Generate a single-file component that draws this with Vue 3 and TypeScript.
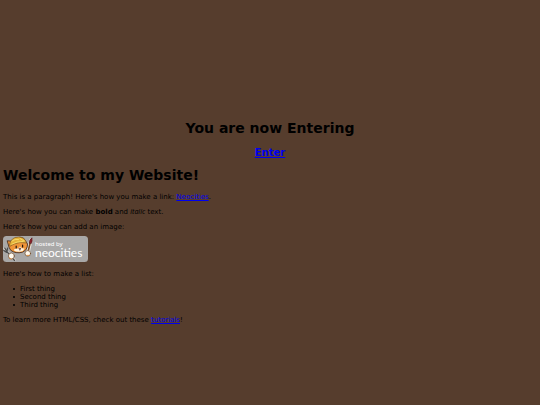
<script setup lang="ts">
const things: string[] = ['First thing', 'Second thing', 'Third thing']
</script>

<template>
  <main class="page">
    <header class="intro">
      <h1>You are now Entering</h1>
      <h2><a href="#welcome">Enter</a></h2>
    </header>

    <h1 id="welcome">Welcome to my Website!</h1>
    <p>This is a paragraph! Here's how you make a link: <a href="#neocities">Neocities</a>.</p>
    <p>Here's how you can make <strong>bold</strong> and <em>italic</em> text.</p>

    <figure>
      <figcaption>Here's how you can add an image:</figcaption>
      <svg class="badge" viewBox="0 0 85 26" role="img" aria-label="hosted by neocities">
        <rect x="0" y="0" width="85" height="26" rx="3.5" fill="#a9a8a7" />
        <g stroke-linejoin="round" stroke-linecap="round">
          <path d="M1.5 12.5 L4 15.5 L11.5 24" fill="none" stroke="#d3cfca" stroke-width="2.6" />
          <path d="M25 16 L28 4" fill="none" stroke="#e9e4dd" stroke-width="3.4" />
          <path d="M0.8 14.5 L3.8 16.4 L4.6 12.2 M1.8 12 L4.2 16 L11.5 24.5" fill="none" stroke="#4b4c4c" stroke-width="1.3" />
          <path d="M25 16 L27.2 6.5" fill="none" stroke="#7d4c20" stroke-width="1.6" />
          <path d="M26.3 7 Q26 3.8 29 1.8 Q29.8 5 28.4 7.4 Z" fill="#8c2029" stroke="#4a2024" stroke-width="0.6" />
          <path d="M6 11 L4.2 4.8 L9 5.2 Q12 0.8 17 1.2 Q21.5 1.5 22.5 5 L24.5 8 Q24.5 14 19.5 16.2 Q12.5 18 8 14.5 Z" fill="#ef9538" stroke="#4b3021" stroke-width="0.9" />
          <path d="M11 13.5 Q13 12.2 15 12.6 L17 10.5 L19 12.2 L21.5 12.4 Q20.5 15 18 15.6 Q13.5 16.4 11 14.5 Z" fill="#fff3dc" />
          <path d="M6.5 8.5 Q8 1 15.5 1 Q22 1 23.5 7 Q17 5.5 11 8 L7.5 10 Z" fill="#e5b23b" stroke="#76501f" stroke-width="0.6" />
          <path d="M9 5 Q12 2.5 15.5 3.5 M17 2.5 L21 5 M9 8 Q14 5.2 20 5.5" fill="none" stroke="#fae373" stroke-width="0.8" />
          <path d="M13.2 10.2 V12 M19.6 9.2 V11" stroke="#21150e" stroke-width="1.2" />
          <path d="M16.2 12.2 H17.8 L17 14 Z" fill="#613229" stroke="#613229" stroke-width="0.6" />
          <circle cx="8.4" cy="20" r="3" fill="#fff9ed" stroke="#6a482b" stroke-width="0.7" />
          <circle cx="24.8" cy="17.4" r="2.8" fill="#fff9ed" stroke="#6a482b" stroke-width="0.7" />
          <path d="M6.4 22 L8.4 23 M24 19.4 L26 19.4" stroke="#df8e3d" stroke-width="0.9" />
        </g>
        <text class="hosted" x="32" y="10">hosted by</text>
        <text class="brand" x="32" y="21">neocities</text>
      </svg>
    </figure>

    <p>Here's how to make a list:</p>
    <ul>
      <li v-for="thing in things" :key="thing">{{ thing }}</li>
    </ul>
    <p>To learn more HTML/CSS, check out these <a href="#tutorials">tutorials</a>!</p>
  </main>
</template>

<style>
body {
  background: #563d2d;
}
</style>

<style scoped>
.page {
  padding: 120px 3px 0;
  color: #000;
  font-family: "DejaVu Sans", Verdana, sans-serif;
  font-size: 7px;
  line-height: 8px;
}

.intro {
  text-align: center;
}

h1 {
  margin: 0 0 10px;
  font-size: 14px;
  line-height: 16px;
}

h2 {
  margin: 0 0 7px;
  font-size: 10px;
  line-height: 14px;
}

p {
  margin: 0 0 7px;
}

a {
  color: #0000ee;
}

em {
  font-family: "Noto Sans", Verdana, sans-serif;
}

figure {
  display: flex;
  flex-direction: column;
  gap: 5px;
  margin: 0 0 8px;
}

.badge {
  display: block;
  width: 85px;
  height: 26px;
}

.hosted,
.brand {
  fill: #fff;
}

.hosted {
  font-family: "Noto Sans", sans-serif;
  font-size: 6px;
}

.brand {
  font-family: Lato, sans-serif;
  font-size: 12px;
}

ul {
  margin: 0 0 7px;
  padding-left: 10px;
  list-style: none;
}

li {
  display: flex;
  align-items: center;
  gap: 5px;
}

li::before {
  width: 2px;
  height: 2px;
  border-radius: 1px;
  background: currentColor;
  content: "";
}
</style>
